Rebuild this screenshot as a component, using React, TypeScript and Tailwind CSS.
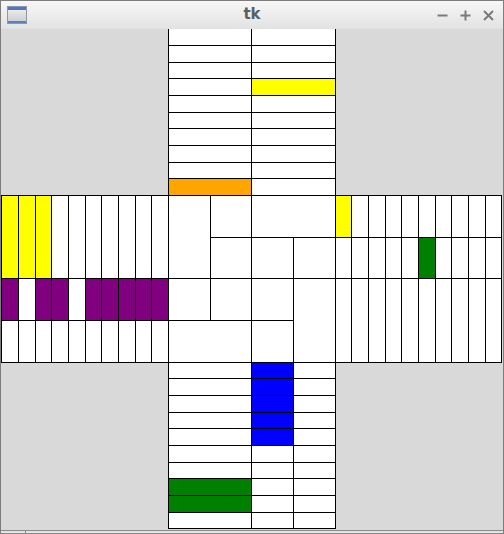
import React from 'react';

// one board cell on the tk canvas: grid units (30 x 30 grid), fill colour
type Cell = { c1: number; r1: number; c2: number; r2: number; fill: string };

const UNIT = 50 / 3;
const WHITE = '#ffffff';
const YELLOW = '#ffff00';
const ORANGE = '#ffa500';
const PURPLE = '#800080';
const GREEN = '#008000';
const BLUE = '#0000ff';

// grid units -> pixel inside the board box
const px = (k: number) => Math.round(1.4 + k * UNIT) - 1;
const py = (k: number) => Math.round(28.4 + k * UNIT) - 28;

const buildCells = (): Cell[] => {
  const cells: Cell[] = [];
  const add = (c1: number, r1: number, c2: number, r2: number, fill = WHITE) =>
    cells.push({ c1, r1, c2, r2, fill });

  // top arm
  for (let r = 0; r < 10; r++) {
    add(10, r, 15, r + 1, r === 9 ? ORANGE : WHITE);
    add(15, r, 20, r + 1, r === 3 ? YELLOW : WHITE);
  }

  // left arm
  const purpleCols = [0, 2, 3, 5, 6, 7, 8, 9];
  for (let i = 0; i < 10; i++) {
    add(i, 10, i + 1, 15, i < 3 ? YELLOW : WHITE);
    add(i, 15, i + 1, 17.5, purpleCols.includes(i) ? PURPLE : WHITE);
    add(i, 17.5, i + 1, 20);
  }

  // right arm
  for (let i = 0; i < 10; i++) {
    const c = 20 + i;
    add(c, 10, c + 1, 12.5, i === 0 ? YELLOW : WHITE);
    add(c, 12.5, c + 1, 15, i === 5 ? GREEN : WHITE);
    add(c, 15, c + 1, 20);
  }

  // centre block
  add(10, 10, 12.5, 15);
  add(12.5, 10, 15, 12.5);
  add(15, 10, 20, 12.5);
  add(12.5, 12.5, 15, 15);
  add(15, 12.5, 17.5, 15);
  add(17.5, 12.5, 20, 15);
  add(10, 15, 12.5, 17.5);
  add(12.5, 15, 15, 17.5);
  add(15, 15, 17.5, 17.5);
  add(17.5, 15, 20, 20);
  add(10, 17.5, 15, 20);
  add(15, 17.5, 17.5, 20);

  // bottom arm
  for (let r = 0; r < 10; r++) {
    const row = 20 + r;
    add(10, row, 15, row + 1, r === 7 || r === 8 ? GREEN : WHITE);
    add(15, row, 17.5, row + 1, r < 5 ? BLUE : WHITE);
    add(17.5, row, 20, row + 1);
  }

  return cells;
};

const cells = buildCells();

const WindowIcon = () => (
  <svg width="20" height="18" viewBox="0 0 20 18">
    <defs>
      <linearGradient id="body" x1="0" y1="0" x2="0" y2="1">
        <stop offset="0" stopColor="#f4f4f4" />
        <stop offset="1" stopColor="#c9c9c9" />
      </linearGradient>
    </defs>
    <rect x="0.5" y="0.5" width="19" height="17" fill="url(#body)" stroke="#8d97a8" />
    <rect x="1" y="1" width="18" height="3" fill="#4f78c4" />
    <rect x="1" y="15" width="18" height="2" fill="#5a7fc2" />
  </svg>
);

const TitleButtons = () => (
  <div className="flex items-center gap-[12px] text-[#7a7a7a]">
    <svg width="11" height="11" viewBox="0 0 11 11">
      <path d="M0.5 5.5H10.5" stroke="currentColor" strokeWidth="2" />
    </svg>
    <svg width="11" height="11" viewBox="0 0 11 11">
      <path d="M0.5 5.5H10.5M5.5 0.5V10.5" stroke="currentColor" strokeWidth="2" />
    </svg>
    <svg width="11" height="11" viewBox="0 0 11 11">
      <path d="M1 1L10 10M10 1L1 10" stroke="currentColor" strokeWidth="2" />
    </svg>
  </div>
);

export default function App() {
  return (
    <div className="w-[504px] h-[534px] flex flex-col overflow-hidden border-x border-t border-[#7d7d7d] bg-[#d9d9d9]">
      {/* title bar */}
      <div className="relative z-10 h-[28px] shrink-0 flex items-center justify-between pl-[6px] pr-[9px] bg-gradient-to-b from-[#f7f7f7] to-[#e2e2e2]">
        <WindowIcon />
        <span className="absolute left-1/2 top-[3px] -translate-x-1/2 text-[15px] font-bold leading-[20px] text-[#5e5e5e] font-['DejaVu_Sans','Liberation_Sans',sans-serif]">
          tk
        </span>
        <TitleButtons />
      </div>

      {/* canvas area */}
      <div className="flex-1 overflow-hidden">
        <div className="relative w-[501px] h-[501px] -mt-px">
          {cells.map((cell, i) => {
            const left = px(cell.c1);
            const top = py(cell.r1);
            return (
              <div
                key={i}
                className="absolute box-border border border-black"
                style={{
                  left,
                  top,
                  width: px(cell.c2) - left + 1,
                  height: py(cell.r2) - top + 1,
                  backgroundColor: cell.fill,
                }}
              />
            );
          })}
        </div>
      </div>

      {/* bottom frame edge */}
      <div className="h-[4px] shrink-0 flex border-y border-[#8a8a8a] bg-[#e4e4e4]">
        <div className="w-[25px] border-r border-[#8a8a8a]" />
      </div>
    </div>
  );
}
